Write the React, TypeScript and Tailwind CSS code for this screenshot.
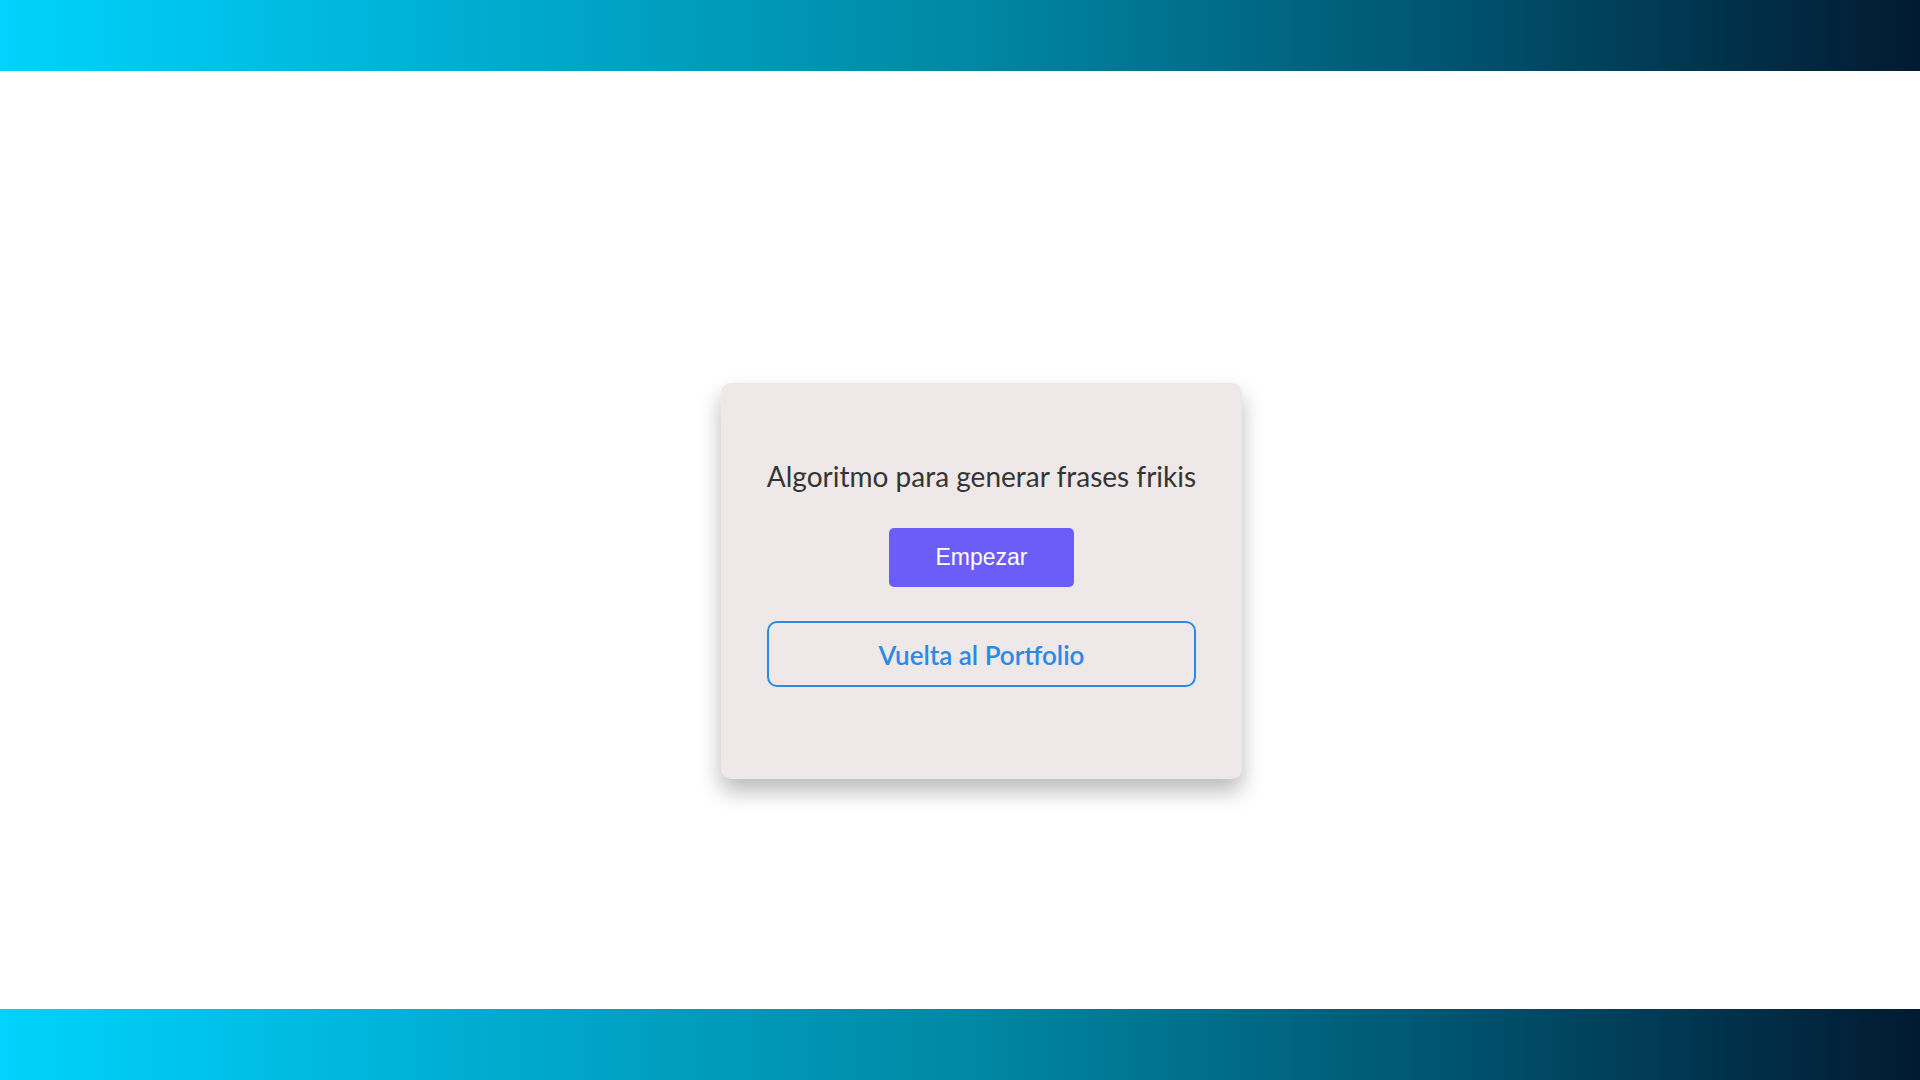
import React from 'react';

const Bar: React.FC = () => (
  <div className="h-[71px] w-full shrink-0 bg-[linear-gradient(to_right,#00d3fd,#00acd0_25%,#0089a5_50%,#005571_75%,#021a31)]" />
);

const App: React.FC = () => {
  return (
    <div className="flex h-[1080px] w-full flex-col overflow-hidden bg-white">
      <Bar />
      <main className="flex flex-1 items-start justify-center pt-[312px] pl-[43px]">
        <div className="flex w-[521px] flex-col items-center rounded-[10px] bg-[#eee8e8] px-[46px] pt-[74px] pb-[92px] shadow-[0_12px_22px_rgba(0,0,0,0.28)]">
          <h1 className="whitespace-nowrap font-['Lato','Noto_Sans',sans-serif] text-[28px] leading-[38px] font-normal text-[#353535]">
            Algoritmo para generar frases frikis
          </h1>
          <button className="mt-[33px] h-[59px] w-[185px] rounded-[5px] bg-[#6c5cf8] font-['Liberation_Sans',Arial,sans-serif] text-[23px] text-white">
            Empezar
          </button>
          <button className="mt-[34px] h-[66px] w-full rounded-[10px] border-2 border-[#2b8ae6] pt-[3px] font-['Lato','Noto_Sans',sans-serif] text-[26px] font-semibold text-[#2b8ae6]">
            Vuelta al Portfolio
          </button>
        </div>
      </main>
      <Bar />
    </div>
  );
};

export default App;
